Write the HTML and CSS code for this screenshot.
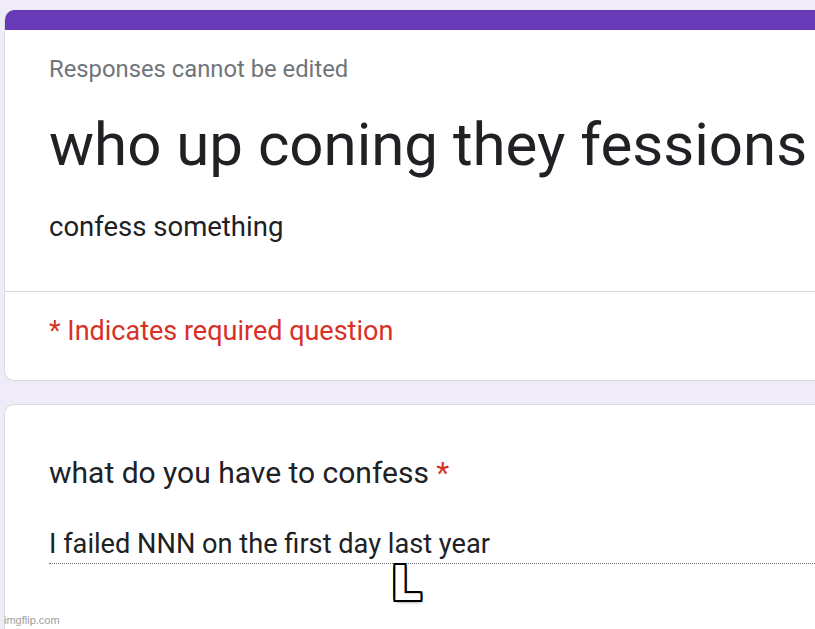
FILE: index.html
```html
<!DOCTYPE html>
<html lang="en">
<head>
    <meta charset="UTF-8">
    <title>who up coning they fessions</title>
    <link rel="stylesheet" href="styles.css">
</head>
<body>

    <!-- Header card -->
    <div class="card header-card">
        <div class="card-top"></div>
        <div class="header-body">
            <div class="notice">Responses cannot be edited</div>
            <h1 class="form-title">who up coning they fessions</h1>
            <div class="form-desc">confess something</div>
        </div>
        <div class="required-row">* Indicates required question</div>
    </div>

    <!-- Question card -->
    <div class="card question-card">
        <div class="question">what do you have to confess <span class="star">*</span></div>
        <div class="answer">I failed NNN on the first day last year</div>
        <div class="meme-caption">L</div>
    </div>

    <div class="watermark">imgflip.com</div>

</body>
</html>
```

FILE: styles.css
```css
body {
    margin: 0;
    background-color: #f0ebf8;
    font-family: Roboto, Arial, sans-serif;
    color: #202124;
    overflow: hidden;
    height: 629px;
    position: relative;
}

/* Cards */
.card {
    background-color: #fff;
    border: 1px solid #dadce0;
    border-right: none;
    border-radius: 10px 0 0 10px;
    margin-left: 4px;
}

.header-card {
    margin-top: 10px;
    overflow: hidden;
    border-top: none;
}

.card-top {
    height: 20px;
    background-color: #673ab7;
}

.header-body {
    padding: 25px 0 48px 44px;
    border-bottom: 1px solid #dadce0;
}

.notice {
    font-size: 23.8px;
    line-height: 28px;
    color: #70757a;
}

.form-title {
    font-size: 60px;
    font-weight: 400;
    line-height: 72px;
    margin: 26px 0 0;
    white-space: nowrap;
}

.form-desc {
    font-size: 27.5px;
    line-height: 32px;
    margin-top: 30px;
}

.required-row {
    color: #d93025;
    font-size: 27px;
    line-height: 32px;
    padding: 23px 0 33px 44px;
}

.question-card {
    margin-top: 23px;
    height: 225px;
    box-sizing: border-box;
    padding: 50px 0 0 44px;
    border-bottom: none;
    border-radius: 10px 0 0 0;
    position: relative;
}

.question {
    font-size: 30px;
    line-height: 36px;
}

.star {
    color: #d93025;
}

.answer {
    font-size: 27.2px;
    line-height: 32px;
    margin-top: 37px;
    padding-bottom: 3px;
    border-bottom: 1px dotted #70757a;
    white-space: nowrap;
}

/* Meme text over the screenshot */
.meme-caption {
    position: absolute;
    left: 386px;
    top: 154px;
    font-family: "DejaVu Sans", sans-serif;
    font-weight: bold;
    font-size: 48px;
    line-height: 48px;
    color: #fff;
    text-shadow:
        2px 0 0 #000, -2px 0 0 #000, 0 2px 0 #000, 0 -2px 0 #000,
        2px 2px 0 #000, -2px -2px 0 #000, 2px -2px 0 #000, -2px 2px 0 #000,
        1px 2px 3px rgba(0, 0, 0, 0.6);
}

.watermark {
    position: absolute;
    left: 4px;
    bottom: 3px;
    font-family: Arial, "Liberation Sans", sans-serif;
    font-size: 11px;
    color: #9e9e9e;
}
```
